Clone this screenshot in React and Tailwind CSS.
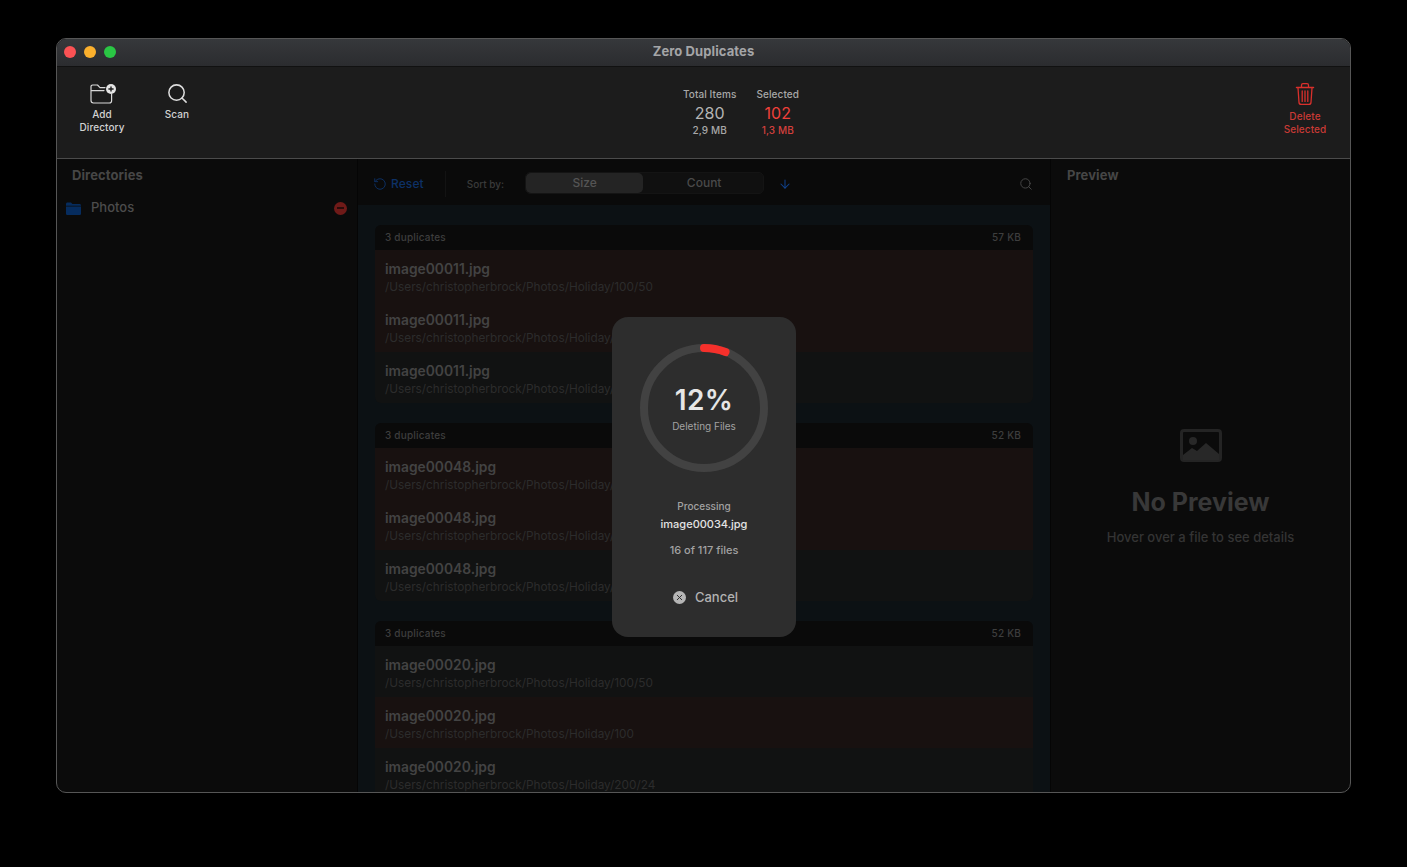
import React from "react";
import { Search, RotateCcw, ArrowDown, X } from "lucide-react";

const groups = [
  { size: "57 KB", name: "image00011.jpg", rows: [
    ["/Users/christopherbrock/Photos/Holiday/100/50", true],
    ["/Users/christopherbrock/Photos/Holiday/100", true],
    ["/Users/christopherbrock/Photos/Holiday/200/24", false],
  ]},
  { size: "52 KB", name: "image00048.jpg", rows: [
    ["/Users/christopherbrock/Photos/Holiday/100/50", true],
    ["/Users/christopherbrock/Photos/Holiday/100", true],
    ["/Users/christopherbrock/Photos/Holiday/200/24", false],
  ]},
  { size: "52 KB", name: "image00020.jpg", rows: [
    ["/Users/christopherbrock/Photos/Holiday/100/50", false],
    ["/Users/christopherbrock/Photos/Holiday/100", true],
    ["/Users/christopherbrock/Photos/Holiday/200/24", false],
  ]},
];

function FolderPlus() {
  return (
    <svg width="28" height="22" viewBox="0 0 28 22" fill="none">
      <path d="M2 5V3.6C2 2.7 2.7 2 3.6 2H8.5L11 4.6H16M2 5V17.6C2 18.9 3 20 4.4 20H20.4C21.6 20 22.6 19 22.6 17.8V11M2 7.6H15" stroke="#d8d8d8" strokeWidth="1.2" strokeLinecap="round" strokeLinejoin="round" />
      <circle cx="22" cy="6" r="5" fill="#e4e4e4" />
      <path d="M22 3.4V8.6M19.4 6H24.6" stroke="#1c1c1c" strokeWidth="1.4" />
    </svg>
  );
}

function Trash() {
  return (
    <svg width="20" height="24" viewBox="0 0 20 24" fill="none" stroke="#d9302c" strokeWidth="1.3" strokeLinecap="round" strokeLinejoin="round">
      <path d="M1.5 5.5H18.5" strokeWidth="1.5" />
      <path d="M6.5 5V3.2C6.5 2.3 7.2 1.6 8 1.6H12C12.8 1.6 13.5 2.3 13.5 3.2V5" />
      <path d="M3 6L4 20.4C4.1 21.6 5 22.4 6.1 22.4H13.9C15 22.4 15.9 21.6 16 20.4L17 6" />
      <path d="M7.2 9V19.4M10 9V19.4M12.8 9V19.4" />
    </svg>
  );
}

function ToolButton({ icon, lines, red, w, labelClass }) {
  return (
    <div className={`flex flex-col items-center ${w}`}>
      <div className="h-[26px] flex items-center justify-center">{icon}</div>
      <div className={`${labelClass} text-[10px] tracking-[0.1px] leading-[13px] text-center font-medium ${red ? "text-[#c93a35]" : "text-[#d2d2d2]"}`}>
        {lines.map((l) => <div key={l}>{l}</div>)}
      </div>
    </div>
  );
}

function Row({ name, path, selected }) {
  return (
    <div className={`h-[51px] px-[10px] pt-[11px] ${selected ? "bg-[#181110]" : "bg-[#111212]"}`}>
      <div className="text-[13.8px] leading-[17px] font-semibold text-[#434343]">{name}</div>
      <div className="mt-[1px] text-[11.8px] leading-[17px] text-[#2c2c2c] whitespace-nowrap">{path}</div>
    </div>
  );
}

function Progress() {
  return (
    <div className="relative w-[128px] h-[128px]">
      <svg width="128" height="128" viewBox="0 0 128 128" fill="none">
        <circle cx="64" cy="64" r="60" stroke="#424242" strokeWidth="8" />
        <circle cx="64" cy="64" r="60" stroke="#f5302b" strokeWidth="8" strokeLinecap="round" strokeDasharray="22 377" transform="rotate(-90 64 64)" />
      </svg>
      <div className="absolute inset-0 flex flex-col items-center">
        <div className="mt-[39px] text-[28px] leading-[34px] font-semibold text-[#e6e6e6] tracking-[0.3px]">12%</div>
        <div className="mt-[2px] text-[10px] leading-[14px] text-[#a2a2a2]">Deleting Files</div>
      </div>
    </div>
  );
}

export default function App() {
  return (
    <div className="w-[1407px] h-[867px] bg-black pt-[38px] pl-[56px] font-['Inter','Liberation_Sans',sans-serif] overflow-hidden">
      <div className="w-[1295px] h-[755px] rounded-[10px] border border-[#565656] overflow-hidden flex flex-col bg-[#0b0b0b]">
        <div className="relative h-[28px] shrink-0 bg-gradient-to-b from-[#36383b] to-[#2b2c2f] border-b border-[#111] flex items-center pl-[7px] pb-[2px] gap-[8px]">
          <span className="w-[12px] h-[12px] rounded-full bg-[#fb5254]" />
          <span className="w-[12px] h-[12px] rounded-full bg-[#fbb02d]" />
          <span className="w-[12px] h-[12px] rounded-full bg-[#2ac644]" />
          <div className="absolute inset-0 pb-[2px] flex items-center justify-center text-[13px] tracking-[0.1px] font-bold text-[#a4a5a7]">Zero Duplicates</div>
        </div>

        <div className="h-[92px] shrink-0 bg-[#1c1c1c] border-b border-[#4b4b4b] flex items-start justify-between pl-[19px] pr-[20px] pt-[14px]">
          <div className="flex gap-[34px] w-[126px]">
            <ToolButton w="w-[52px] pl-[2px]" labelClass="mt-[1px] -ml-[2px]" icon={<FolderPlus />} lines={["Add", "Directory"]} />
            <ToolButton w="w-[30px]" labelClass="mt-[1px]" icon={<div className="-mt-[2px]"><Search size={23} strokeWidth={1.6} color="#dcdcdc" /></div>} lines={["Scan"]} />
          </div>
          <div className="flex gap-[20px] pt-[6px]">
            <div className="flex flex-col items-center">
              <div className="text-[10px] tracking-[0.1px] leading-[14px] font-medium text-[#a8a8a8]">Total Items</div>
              <div className="text-[16px] leading-[24px] font-normal text-[#b4b4b4]">280</div>
              <div className="-mt-[2px] text-[10px] tracking-[0.1px] leading-[14px] font-medium text-[#a8a8a8]">2,9 MB</div>
            </div>
            <div className="flex flex-col items-center">
              <div className="text-[10px] tracking-[0.1px] leading-[14px] font-medium text-[#a8a8a8]">Selected</div>
              <div className="text-[16px] leading-[24px] font-normal text-[#f0403a]">102</div>
              <div className="-mt-[2px] text-[10px] tracking-[0.1px] leading-[14px] font-medium text-[#d4403c]">1,3 MB</div>
            </div>
          </div>
          <ToolButton w="w-[50px]" red labelClass="mt-[3px]" icon={<Trash />} lines={["Delete", "Selected"]} />
        </div>

        <div className="flex-1 min-h-0 flex">
          <div className="w-[301px] shrink-0 border-r border-[#050505] pt-[8px]">
            <div className="pl-[15px] text-[13px] tracking-[0.1px] leading-[17px] font-bold text-[#464646]">Directories</div>
            <div className="mt-[15px] pl-[9px] pr-[10px] h-[18px] flex items-center">
              <svg width="15" height="13" viewBox="0 0 15 13" fill="#062c5e">
                <path d="M0 2C0 1 .6.4 1.6.4H5L6.4 2H13.4C14.4 2 15 2.6 15 3.6V3.8H0Z" />
                <path d="M0 4.6H15V11.4C15 12.4 14.4 13 13.4 13H1.6C.6 13 0 12.4 0 11.4Z" />
              </svg>
              <span className="ml-[10px] text-[13px] font-medium text-[#4c4c4c]">Photos</span>
              <span className="ml-auto w-[13px] h-[13px] rounded-full bg-[#6f1a18] flex items-center justify-center">
                <span className="w-[7px] h-[1.5px] bg-[#2a0c0b]" />
              </span>
            </div>
          </div>

          <div className="relative w-[693px] shrink-0 border-r border-[#050505] flex flex-col min-h-0">
            <div className="h-[46px] shrink-0 bg-[#0a0a0a] flex items-center pl-[15px] pr-[17px] pt-[4px]">
              <RotateCcw size={14} strokeWidth={1.6} color="#0d3166" />
              <span className="ml-[4px] text-[12px] tracking-[0.1px] font-medium text-[#0d3166]">Reset</span>
              <span className="ml-[21px] w-px h-[26px] bg-[#131313]" />
              <span className="ml-[21px] text-[10px] font-medium text-[#3a3a3a]">Sort by:</span>
              <div className="ml-[21px] w-[239px] h-[22px] mb-[2px] rounded-[5px] bg-[#101010] flex border border-[#141414]">
                <div className="w-[117px] rounded-[5px] bg-[#242424] text-center text-[12px] leading-[19px] font-medium text-[#555]">Size</div>
                <div className="flex-1 pl-[2px] text-center text-[12px] leading-[19px] font-medium text-[#4a4a4a]">Count</div>
              </div>
              <ArrowDown size={14} strokeWidth={1.8} color="#10408a" className="ml-[14px]" />
              <Search size={14} strokeWidth={1.6} color="#4a4a4a" className="ml-auto" />
            </div>
            <div className="flex-1 min-h-0 overflow-hidden bg-[#0c1114] px-[17px] pt-[20px] flex flex-col gap-[20px]">
              {groups.map((g, i) => (
                <div key={i} className="shrink-0 rounded-[6px] overflow-hidden">
                  <div className="h-[25px] bg-[#0a0a0a] flex items-center justify-between pl-[10px] pr-[12px] text-[10px] tracking-[0.2px] font-medium text-[#3e3e3e]">
                    <span>3 duplicates</span>
                    <span>{g.size}</span>
                  </div>
                  {g.rows.map(([p, s], j) => <Row key={j} name={g.name} path={p} selected={s} />)}
                </div>
              ))}
            </div>
            <div className="absolute left-[254px] top-[158px] w-[184px] h-[320px] rounded-[16px] bg-[#2d2d2d] flex flex-col items-center pt-[27px]">
              <Progress />
              <div className="mt-[27px] text-[10px] leading-[14px] font-medium text-[#a2a2a2]">Processing</div>
              <div className="mt-[4px] text-[11px] leading-[14px] font-medium text-[#e4e4e4]">image00034.jpg</div>
              <div className="mt-[12px] text-[11px] leading-[14px] font-medium text-[#a2a2a2]">16 of 117 files</div>
              <div className="mt-[30px] flex items-center gap-[9px]">
                <span className="ml-[3px] w-[13px] h-[13px] rounded-full bg-[#b5b5b5] flex items-center justify-center">
                  <X size={9} strokeWidth={2.6} color="#2d2d2d" />
                </span>
                <span className="text-[13px] leading-[20px] font-medium text-[#b2b2b2]">Cancel</span>
              </div>
            </div>
          </div>

          <div className="flex-1 min-w-0 flex flex-col">
            <div className="pl-[16px] pt-[8px] text-[13px] tracking-[0.1px] leading-[17px] font-bold text-[#464646]">Preview</div>
            <div className="flex flex-col items-center mt-[245px]">
              <svg width="42" height="33" viewBox="0 0 42 33" fill="none">
                <rect x="1.5" y="1.5" width="39" height="30" rx="2.5" stroke="#242424" strokeWidth="3" />
                <circle cx="13" cy="12" r="4" fill="#282828" />
                <path d="M3 31V26L12 19L17 22L26 14L39 25V31Z" fill="#282828" />
              </svg>
              <div className="mt-[24px] text-[25px] leading-[32px] font-bold text-[#383838]">No Preview</div>
              <div className="mt-[10px] text-[13px] leading-[18px] font-medium text-[#343434]">Hover over a file to see details</div>
            </div>
          </div>
        </div>
      </div>
    </div>
  );
}
